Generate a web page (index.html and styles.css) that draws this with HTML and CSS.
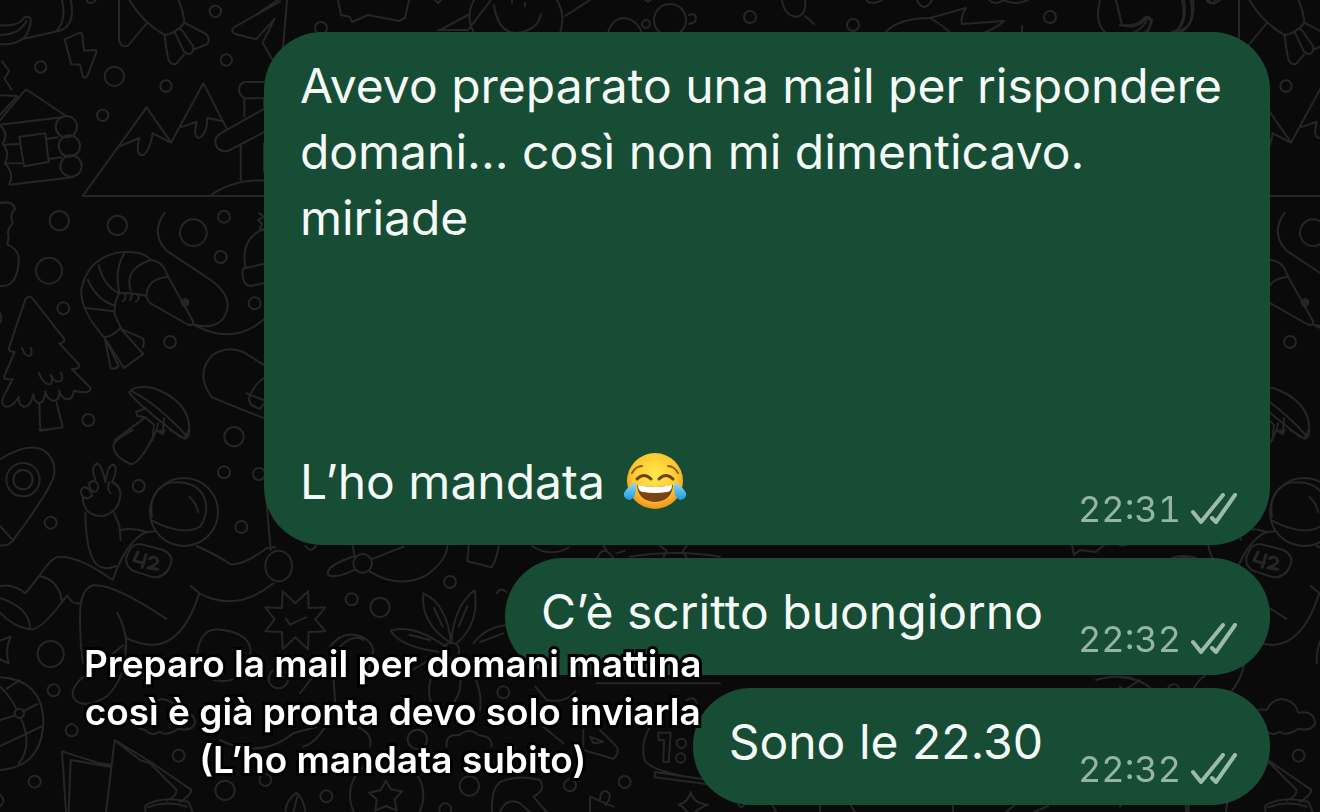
FILE: index.html
```html
<!DOCTYPE html>
<html lang="it">
<head>
  <meta charset="UTF-8">
  <meta name="viewport" content="width=device-width,initial-scale=1">
  <title>Chat</title>
  <link rel="stylesheet" href="styles.css">
</head>
<body>

  <svg class="wallpaper" aria-hidden="true">
    <defs>
      <g id="doodles">
        <!-- rocket, cabin, mountains -->
        <g transform="scale(.33333)">
          <path d="M186 0Q200 60 170 92M212 0Q228 75 180 92L70 116M0 76Q55 80 72 54Q82 45 92 56Q95 80 74 112Q45 138 0 132M0 104Q55 106 80 62"/>
          <path d="M259 0Q272 20 288 0"/>
          <path d="M194 118L240 98Q247 98 247 106L252 152L286 150Q292 152 288 160L262 228Q254 238 249 230L240 194L214 193Z"/>
          <circle cx="122" cy="201" r="17"/><circle cx="343" cy="229" r="29"/><circle cx="498" cy="258" r="17"/><circle cx="308" cy="346" r="17"/><circle cx="646" cy="34" r="17"/><circle cx="679" cy="180" r="17"/>
          <path d="M357 0V120Q362 145 385 136L440 70M388 0Q430 70 494 105Q530 100 553 68Q550 30 535 0M494 105Q498 150 506 180Q515 198 530 190L552 164M553 68L618 102Q632 116 622 132L582 148M524 96Q535 80 547 92L580 140Q582 160 564 163L552 155Z"/>
          <path d="M840 4L702 82Q690 95 706 102L768 118L824 56L788 128L820 184"/>
          <path d="M6 184L27 212L14 236L34 268M0 286L52 288L0 345M0 360L74 272Q80 268 88 274L198 348M0 374L186 352M14 434L56 432M16 490L66 490M28 554L220 532M138 417L174 412M146 477L184 472M58 410L136 400L146 486L72 499Z"/>
          <circle cx="199" cy="380" r="32"/><circle cx="208" cy="438" r="32"/><circle cx="213" cy="498" r="32"/>
          <path d="M0 376Q28 400 8 432Q32 460 14 490Q44 520 28 552M0 610Q42 600 44 630"/>
          <path d="M820 588H248L440 322L513 428L610 250L680 386M362 438L418 414Q404 468 430 466Q450 450 458 400L513 428M540 382L590 366Q578 412 598 414Q622 400 622 354L670 364"/>
          <path d="M810 246H734Q714 252 718 276Q725 298 748 295H810M733 296V350M792 296V320M800 322L662 400Q636 416 652 444Q668 460 690 450L820 382M722 434V540M792 430V516M632 586Q710 530 820 544"/>
        </g>
        <!-- tree, prawn, mushroom -->
        <g transform="translate(0 200) scale(.33333)">
          <path d="M0 8Q44 2 45 28Q28 38 38 70Q18 90 26 110L22 134Q60 150 56 184Q52 262 0 258"/>
          <circle cx="178" cy="62" r="29"/><circle cx="352" cy="76" r="29"/><circle cx="580" cy="98" r="40"/><circle cx="672" cy="50" r="18"/><circle cx="662" cy="171" r="18"/><circle cx="147" cy="212" r="39"/><circle cx="190" cy="325" r="18"/><circle cx="510" cy="426" r="18"/><circle cx="764" cy="310" r="18"/><circle cx="265" cy="660" r="18"/><circle cx="702" cy="710" r="29"/>
          <path d="M0 340Q8 354 0 368"/>
          <path d="M76 298Q88 282 98 296L192 416Q196 430 178 430L236 492Q244 506 216 508L272 564Q272 584 222 572Q218 600 200 598Q184 594 178 572Q180 605 158 602Q140 596 136 574Q132 616 112 608Q102 602 100 582Q90 625 70 620Q54 614 56 590Q40 622 18 620Q0 614 10 590L38 538Q6 540 14 526L44 456Q22 456 28 440ZM66 444Q76 474 92 466Q98 456 92 444M116 518Q132 558 152 552Q160 546 152 524Q164 552 184 542Q190 530 182 518M118 612L121 692L188 682L170 608"/>
          <path d="M312 412Q240 330 244 270Q260 180 350 158Q430 150 452 180Q490 184 502 226L580 366Q578 380 560 372L452 310Q434 294 442 270Q452 236 502 230M362 382L344 344Q342 300 358 280Q390 276 440 288M362 382Q340 410 312 412M258 324L340 334M264 240Q290 300 346 318M296 196Q312 260 358 280M374 158Q342 210 358 276M452 180Q372 206 392 272M376 280Q378 300 368 304M394 280Q396 296 390 300M410 282Q424 295 408 304"/>
          <path d="M314 412L332 504Q346 510 356 498L318 420L372 504L430 462L362 386L430 416Q434 430 428 442"/>
          <circle cx="555" cy="308" r="10" fill="#242424"/>
          <path d="M494 38Q450 100 500 152L626 236Q690 280 682 326Q668 394 580 374Q706 442 800 350"/>
          <path d="M800 84Q720 110 736 200L728 210Q724 254 752 258L800 248M736 204L800 190M778 40L792 50L774 60L786 72L780 86L798 94"/>
          <path d="M800 500L730 456Q680 436 636 466Q584 524 636 592L660 602L800 658M800 530Q764 548 748 592Q742 616 780 626L800 600M740 580L790 600"/>
          <path d="M388 578Q400 554 460 564Q570 604 568 690Q566 726 540 710Q410 610 388 578ZM396 574Q470 610 560 708M438 624L408 636L412 648L436 652L344 720M436 652L462 674L458 720M474 670L470 690L488 704L492 654"/>
        </g>
        <!-- map pin and astronaut -->
        <g transform="translate(0 430) scale(.33333)">
          <path d="M0 88Q80 36 130 60Q170 88 162 136Q152 180 38 332Q22 350 0 346M0 288L40 332M118 0L150 -2"/>
          <circle cx="69" cy="149" r="50"/><circle cx="69" cy="149" r="29"/><circle cx="152" cy="278" r="18"/><circle cx="416" cy="168" r="18"/><circle cx="672" cy="127" r="18"/><circle cx="777" cy="132" r="18"/><circle cx="724" cy="291" r="18"/>
          <path d="M470 0Q420 104 392 102Q340 80 340 44Q350 24 398 0M480 0L488 12L494 0M510 0L554 26L566 0"/>
          <circle cx="552" cy="246" r="102"/><path d="M456 260Q444 180 510 158Q580 150 606 190Q634 240 600 290Q550 320 456 272M568 200Q590 220 594 246"/>
          <path d="M286 148Q270 110 292 100Q306 106 316 156Q326 96 344 106Q354 120 336 156Q370 170 358 212Q350 246 310 258Q250 260 248 200Q236 180 250 172Q270 170 276 198Q262 210 248 200M266 162Q276 148 290 156Q302 176 284 186Q272 184 266 162M328 156Q320 180 332 190"/>
          <path d="M256 248Q258 390 300 410Q324 420 348 408M342 248L358 286L362 330M362 300Q400 292 440 306L466 304M440 306Q380 330 338 450Q240 380 180 380Q156 378 118 438L76 490Q40 460 0 468M118 438Q178 450 186 516M186 516Q120 604 88 598Q40 590 0 548M0 504Q90 534 90 596M186 516L202 496Q216 524 240 520"/>
          <path d="M420 342L490 360Q524 378 510 408Q496 442 460 442L398 422Q366 400 386 366Q396 342 420 342Z"/>
          <path class="bold" d="M414 366L402 392L432 400M438 374L426 412M448 386Q466 374 474 392Q474 402 444 414L474 418"/>
          <path d="M590 348Q660 380 690 402Q730 408 800 354L826 352M572 468L598 490Q710 550 820 460M598 490Q550 640 460 645Q410 642 376 622M498 566Q340 460 280 466Q240 476 240 560Q240 650 250 700M352 548Q390 620 374 680M798 200L812 360"/>
          <ellipse cx="836" cy="408" rx="40" ry="46"/>
        </g>
        <!-- globe, cloud, books -->
        <g transform="translate(0 600) scale(.33333)">
          <circle cx="152" cy="162" r="39"/><circle cx="161" cy="271" r="18"/><circle cx="215" cy="391" r="18"/><circle cx="104" cy="545" r="18"/><circle cx="536" cy="467" r="18"/><circle cx="796" cy="540" r="18"/><circle cx="675" cy="571" r="29"/><circle cx="835" cy="236" r="29"/>
          <path d="M0 122L32 110Q14 150 26 190L0 178M0 232Q130 240 130 370Q124 500 0 510M0 260Q40 300 50 330M0 360L46 346M70 334L112 312M62 352Q100 440 56 490M0 438L124 380M60 240L20 266M0 584Q20 600 0 620"/>
          <circle cx="58" cy="340" r="14"/>
          <path d="M370 135L290 200Q200 260 222 296Q250 330 320 290Q380 230 376 140M590 190Q590 90 650 88Q746 96 752 150L746 200M640 240Q690 250 710 230"/>
          <path d="M436 390Q390 380 398 340Q410 324 440 330Q460 290 500 300Q530 310 534 338Q580 330 586 368Q576 396 536 386Q500 410 480 396Q452 410 436 390Z"/>
          <path d="M198 636L186 454L300 490L334 494M206 636L212 480L330 500M318 636L344 420L452 486L572 568Q580 580 540 606M348 424L420 480L450 490L530 570Q530 590 500 602M436 636V616Q490 586 566 606L578 636M444 622Q500 600 560 620"/>
          <path d="M660 420Q780 480 880 400L950 380M900 280L946 220"/>
        </g>
      </g>
    </defs>

    <use href="#doodles"/>
    <use href="#doodles" x="1120"/>

    <!-- strip along the top -->
    <path d="M338 0L341 15L350 17L352 22L368 15L399 21L405 18L409 0M435 0L438 3L441 0M491 0L468 30L438 30M468 15L440 30M474 0Q465 16 474 33M557 0Q566 16 560 33M494 5Q498 33 517 33Q538 30 541 14M512 0V3M525 3V6M590 0L565 16M287 0L283 48M278 0L260 12"/>
    <path d="M608 33Q612 18 625 18Q637 20 642 33M689 15Q698 12 695 22L689 24M782 0Q784 16 797 17Q807 14 805 0M805 16L814 24M645 0L648 2L651 0M866 0Q872 6 882 0M917 0Q924 14 932 0M989 0Q995 6 1004 0Q1014 6 1028 0M885 33Q898 18 930 18L966 8Q960 18 962 24L1004 21Q994 30 980 34M930 18Q944 26 950 33M1022 26V33M1208 0L1214 4L1220 0"/>
    <circle cx="670" cy="20" r="16"/><circle cx="646" cy="24" r="4"/><circle cx="750" cy="17" r="6"/><circle cx="853" cy="25" r="6"/><circle cx="1050" cy="17" r="6"/><circle cx="321" cy="28" r="6"/>
    <path d="M1100 0Q1094 24 1106 33M1116 0L1122 25Q1138 30 1146 18L1152 20Q1151 28 1144 33M1184 0Q1188 28 1172 32M1193 0Q1196 24 1180 33"/>

    <!-- star, scarf, flower, medal around the lower bubbles -->
    <g transform="translate(280 530) scale(.33333)">
      <path d="M8 184L46 220L84 184L86 234L136 232L106 268L136 304L86 306L84 358L46 322L8 358L6 306L-44 304L-16 268L-44 232L6 234ZM18 266L30 284L78 262"/>
      <circle cx="215" cy="208" r="18"/><circle cx="300" cy="232" r="29"/><circle cx="510" cy="156" r="18"/><circle cx="670" cy="487" r="18"/><circle cx="412" cy="628" r="29"/><circle cx="1034" cy="756" r="18"/><circle cx="870" cy="766" r="18"/><circle cx="568" cy="768" r="29"/><circle cx="139" cy="799" r="18"/><circle cx="496" cy="838" r="18"/><circle cx="248" cy="100" r="28"/><circle cx="320" cy="796" r="110"/>
      <path d="M76 48Q90 70 108 48M224 78L218 48M224 78Q130 110 146 136Q170 146 226 118M274 88L370 50M268 124Q360 180 442 134Q500 90 502 48M566 48L562 94L634 112Q650 90 656 48M756 48Q810 84 866 52M952 84Q970 40 1000 84M980 60L970 48M1010 70L1034 62M1050 80Q1190 58 1320 80M1140 48L1160 62L1150 84M1220 48L1208 62L1220 84"/>
      <path d="M514 340Q420 280 430 190Q500 220 514 340Q520 230 584 180Q600 280 530 340M462 234L488 290M562 228L536 290M500 352Q400 280 332 302Q360 350 480 366M388 314L450 330M580 340Q620 290 680 286M600 336L670 310M650 190Q660 170 680 186M480 372L380 430M470 400Q430 480 460 530M540 430Q550 500 500 540M560 400Q610 470 600 540"/>
      <circle cx="514" cy="362" r="24"/>
      <path d="M150 350Q180 310 220 314Q270 320 280 360L260 450M180 350Q220 310 250 330M160 440L166 520Q130 630 70 650M230 590Q280 610 270 650M500 650Q496 610 536 616Q570 590 596 616Q640 620 634 650M700 640Q706 650 706 660"/>
      <path d="M318 752L332 778L366 784L344 808L350 842L318 828L286 842L290 808L268 788L302 780ZM16 846Q18 810 50 788Q72 810 76 846M40 846L52 800M636 846Q632 780 660 756Q720 732 780 750Q800 780 760 800L800 846M660 846Q680 800 720 820L750 846"/>
      <path d="M766 470L800 510Q860 520 886 484M790 590L850 640M910 600V660L1000 686Q1020 670 1010 650L960 600M930 620L940 640L970 636ZM1110 590Q1080 640 1094 690Q1110 720 1220 740M1134 608H1172L1166 696H1150L1152 630H1136ZM1124 726L1270 748M1124 726V742L1280 762M950 460H1320M1220 510Q1244 496 1250 520"/>
      <circle cx="1204" cy="640" r="14"/><circle cx="1202" cy="684" r="14"/>
      <path d="M930 846V800L1000 830M960 810Q960 780 980 784Q1000 796 976 826M1232 786Q1240 820 1284 824Q1240 840 1230 870Q1224 836 1196 824Q1226 816 1232 786Z"/>
    </g>

    <!-- slivers between and below the bubbles -->
    <path d="M1072 545L1074 555L1080 550L1096 552L1104 545M1172 558Q1184 554 1196 558M772 804L776 812M820 806V812M850 804L855 812M953 804V812M1006 812L1016 804M1034 812L1048 806M1186 804L1188 812M1096 680Q1116 674 1132 678M738 804Q741 810 745 804"/>
  </svg>

  <main class="chat">
    <div class="bubble long">
      <p class="message">Avevo preparato una mail per rispondere<br>domani... così non mi dimenticavo.<br>miriade<br><br><br><br>L’ho mandata
        <svg class="emoji" viewBox="0 0 62 60" role="img" aria-label="😂">
          <defs>
            <radialGradient id="face" cx=".5" cy=".4" r=".6">
              <stop offset="0" stop-color="#ffe94f"/>
              <stop offset=".65" stop-color="#fdca30"/>
              <stop offset="1" stop-color="#ee9120"/>
            </radialGradient>
            <linearGradient id="tear" x1="0" y1="0" x2="0" y2="1">
              <stop offset="0" stop-color="#8fe0fb"/>
              <stop offset="1" stop-color="#2196dc"/>
            </linearGradient>
          </defs>
          <circle cx="31" cy="30" r="28" fill="url(#face)"/>
          <path d="M8 22Q12 15 18 15M44 15Q50 15 54 22" fill="none" stroke="#8f5a14" stroke-width="2" stroke-linecap="round"/>
          <path d="M13 28Q20 21 27 28M35 28Q42 21 49 28" fill="none" stroke="#70400c" stroke-width="3" stroke-linecap="round"/>
          <path d="M13 34Q31 38 49 34Q48 50 31 51Q14 50 13 34Z" fill="#7b4314"/>
          <path d="M14 34Q31 38 48 34Q48 41 43 41Q31 43 19 41Q14 41 14 34Z" fill="#fff"/>
          <path d="M12 31Q13 47 6 49Q-1 48 0 42Q2 37 12 31ZM50 31Q49 47 56 49Q63 48 62 42Q60 37 50 31Z" fill="url(#tear)"/>
        </svg>
      </p>
      <span class="meta"><time datetime="22:31">22:31</time><svg class="ticks" viewBox="0 0 46 32"><path d="M2 19L10 29L32 2M21 25L25 29L44 2"/></svg></span>
    </div>

    <div class="bubble">
      <p class="message">C’è scritto buongiorno</p>
      <span class="meta"><time datetime="22:32">22:32</time><svg class="ticks" viewBox="0 0 46 32"><path d="M2 19L10 29L32 2M21 25L25 29L44 2"/></svg></span>
    </div>

    <div class="bubble">
      <p class="message">Sono le 22.30</p>
      <span class="meta"><time datetime="22:32">22:32</time><svg class="ticks" viewBox="0 0 46 32"><path d="M2 19L10 29L32 2M21 25L25 29L44 2"/></svg></span>
    </div>

    <p class="caption">Preparo la mail per domani mattina<br>così è già pronta devo solo inviarla<br>(L’ho mandata subito)</p>
  </main>

</body>
</html>
```

FILE: styles.css
```css
body {
  margin: 0;
  background-color: #0a0a0a;
  color: #f4faf6;
  font-family: Inter, "Liberation Sans", sans-serif;
}
.wallpaper {
  position: fixed;
  top: 0;
  left: 0;
  width: 100%;
  height: 100%;
  fill: none;
  stroke: #262626;
  stroke-linecap: round;
  stroke-linejoin: round;
}
.wallpaper path,
.wallpaper circle,
.wallpaper ellipse {
  stroke-width: 2px;
  vector-effect: non-scaling-stroke;
}
.wallpaper .bold {
  stroke-width: 3px;
}
.chat {
  position: relative;
  display: flex;
  flex-direction: column;
  align-items: flex-end;
  gap: 13px;
  padding: 32px 50px 8px;
}
.bubble {
  position: relative;
  padding: 21px 227px 30px 36px;
  border-radius: 58px;
  background-color: #174c35;
}
.bubble.long {
  padding-right: 48px;
}
.message {
  margin: 0;
  font-size: 48px;
  line-height: 66px;
}
.emoji {
  width: 62px;
  height: 60px;
  margin-left: 6px;
  vertical-align: -12px;
}
.meta {
  position: absolute;
  right: 33px;
  bottom: 14px;
  display: flex;
  align-items: center;
  gap: 10px;
  color: #94b5a4;
  font-size: 36px;
  font-variant-numeric: tabular-nums;
  line-height: 44px;
}
.ticks {
  width: 46px;
  height: 32px;
  fill: none;
  stroke: #9dbbac;
  stroke-width: 4;
  stroke-linecap: round;
  stroke-linejoin: round;
}
.caption {
  position: absolute;
  left: 84px;
  top: 640px;
  margin: 0;
  color: #fff;
  font-size: 37px;
  font-weight: 600;
  line-height: 48px;
  text-align: center;
  -webkit-text-stroke: 6px #000;
  paint-order: stroke fill;
}
```
